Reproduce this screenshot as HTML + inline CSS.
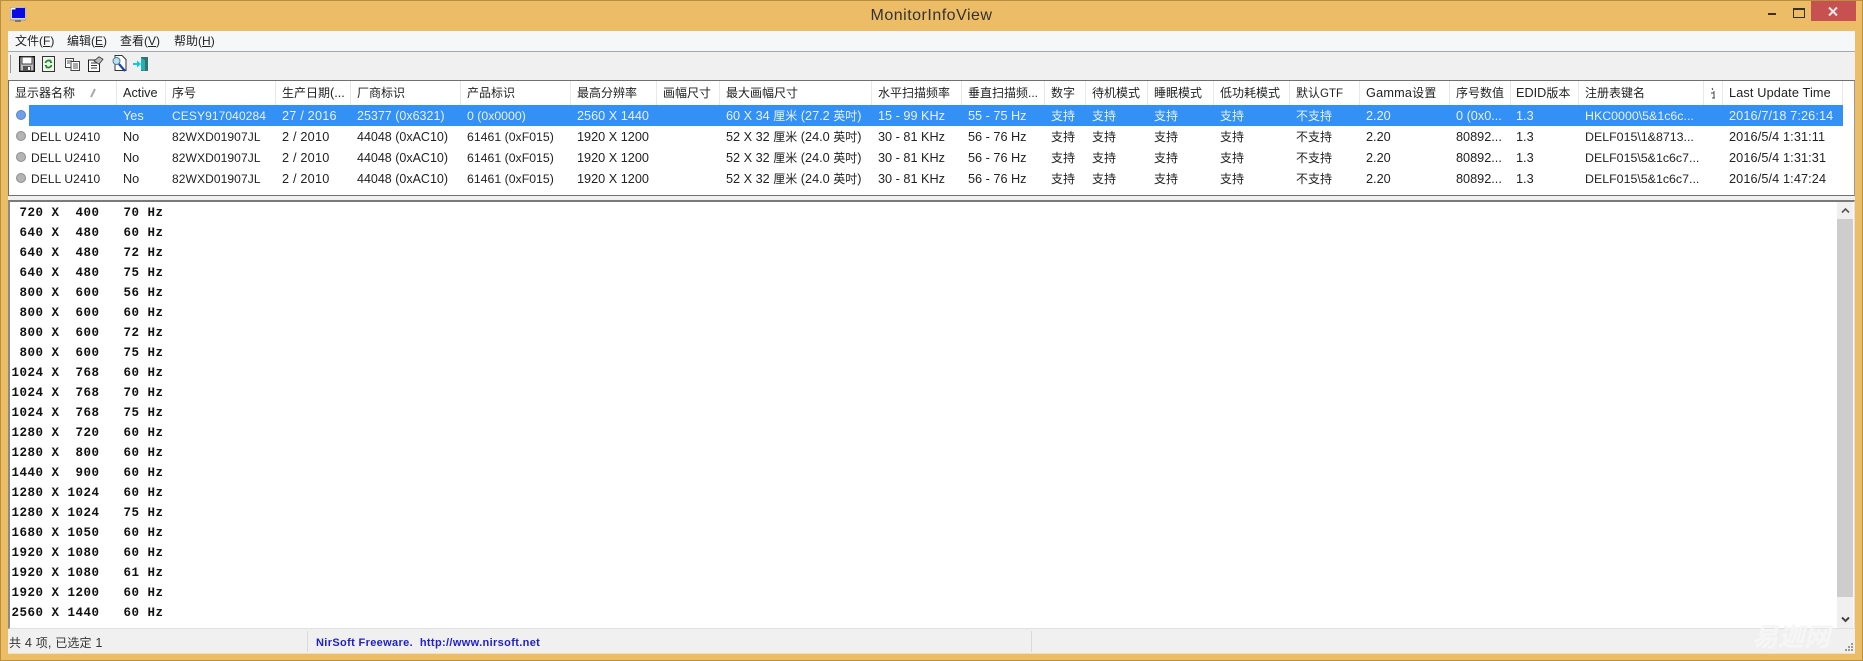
<!DOCTYPE html>
<html><head><meta charset="utf-8"><style>
html,body{margin:0;padding:0;width:1863px;height:661px;overflow:hidden;background:#edbc66}
body{position:relative;font-family:"Liberation Sans","Noto Sans CJK SC",sans-serif;color:#222}
div,span{position:absolute;white-space:pre}
i{font-style:normal;font-size:12px}
.h,.r{left:0;width:1863px;height:21px;line-height:21px;font-size:12.7px}
.h span{top:0}
.r span{top:1px}
.sep{top:81px;width:1px;height:24px;background:#e8e8e8}
.dot{left:16px;width:10px;height:10px;border-radius:50%;background:#b4b4b4;border:1px solid #8e8e8e;box-sizing:border-box}
.r.s{color:#e6f1ff}
.r .n{font-size:12px;letter-spacing:.1px}
.r .d{letter-spacing:.2px}
.r .v{font-size:12.5px}
.r .p{font-size:12.3px}
.r .k{font-size:12.4px}
.r .t{letter-spacing:.12px}
.m{top:31px;height:20px;line-height:20px;font-size:12px;color:#222}
</style></head><body>
<div style="left:0;top:0;width:1863px;height:661px;box-sizing:border-box;border:1px solid #b8903f"></div>
<svg style="position:absolute;left:10px;top:7px" width="16" height="16" viewBox="0 0 16 16"><rect x="0" y="0" width="16" height="13" fill="#d8d8d8" stroke="#666" stroke-width=".5"/><rect x="2" y="1" width="13" height="10" fill="#0a0ae0"/><rect x="1.5" y="1" width="4" height="1.5" fill="#fff"/><rect x="5" y="13" width="6" height="2" fill="#777"/></svg>
<div style="left:0;top:6px;width:1863px;text-align:center;font-size:16px;letter-spacing:.5px;line-height:20px;color:#333">MonitorInfoView</div>
<div style="left:1768px;top:13px;width:8px;height:2px;background:#3a3020"></div>
<div style="left:1793px;top:8px;width:10px;height:7px;border:1px solid #3a3020;border-top-width:2px"></div>
<div style="left:1811px;top:1px;width:45px;height:20px;background:#c75050"></div>
<svg style="position:absolute;left:1827px;top:6px" width="13" height="11" viewBox="0 0 13 11"><path d="M2 1.5L10 9.5M10 1.5L2 9.5" stroke="#f6e6e6" stroke-width="2"/></svg>

<div style="left:8px;top:31px;width:1847px;height:622px;background:#f0f0f0"></div>
<div style="left:8px;top:31px;width:1847px;height:20px;background:#f6f7f8"></div>
<div style="left:8px;top:51px;width:1847px;height:1px;background:#a8a8a8"></div>
<div class="m" style="left:15px"><i>文件</i>(<u>F</u>)</div>
<div class="m" style="left:67px"><i>编辑</i>(<u>E</u>)</div>
<div class="m" style="left:120px"><i>查看</i>(<u>V</u>)</div>
<div class="m" style="left:174px"><i>帮助</i>(<u>H</u>)</div>

<div style="left:10px;top:55px;width:1px;height:18px;background:#9a9a9a"></div>
<svg style="position:absolute;left:19px;top:56px" width="16" height="16" viewBox="0 0 16 16"><rect x=".7" y=".7" width="14.6" height="14.6" fill="#bdbdbd" stroke="#111" stroke-width="1.4"/><rect x="3" y="1" width="10" height="7" fill="#fff" stroke="#444" stroke-width="1"/><rect x="4" y="10" width="8" height="5" fill="#555"/><rect x="9" y="11" width="2" height="3" fill="#fff"/></svg>
<svg style="position:absolute;left:42px;top:56px" width="13" height="16" viewBox="0 0 13 16"><rect x=".5" y=".5" width="12" height="15" fill="#eef6ea" stroke="#333"/><path d="M3.5 7a3.2 3.2 0 0 1 5.5-1.5M9.5 9a3.2 3.2 0 0 1-5.5 1.5" fill="none" stroke="#1d8a2a" stroke-width="1.8"/><path d="M8 3v4h2.500zM5 13V9H2.500z" fill="#1d8a2a"/></svg>
<svg style="position:absolute;left:65px;top:58px" width="15" height="13" viewBox="0 0 15 13"><rect x=".5" y=".5" width="8" height="9" fill="#fff" stroke="#444"/><rect x="6" y="3.500" width="8.500" height="9" fill="#fff" stroke="#444"/><path d="M2 3h5M2 5h3M8 6h5M8 8h5M8 10h5" stroke="#555"/></svg>
<svg style="position:absolute;left:88px;top:56px" width="16" height="16" viewBox="0 0 16 16"><rect x=".5" y="4" width="11" height="11.500" fill="#fff" stroke="#222"/><path d="M3 7h6M3 9.500h6M3 12h6" stroke="#333"/><path d="M6 5L11 .8l4 2.400-4 5z" fill="#bbb" stroke="#333" stroke-width=".8"/></svg>
<svg style="position:absolute;left:112px;top:55px" width="15" height="18" viewBox="0 0 15 18"><path d="M3 .5h7l4 4v11H3z" fill="#fff" stroke="#333"/><circle cx="4.500" cy="6" r="3.500" fill="#bfe0ee" stroke="#4a7f9a"/><path d="M7 9l6 7" stroke="#2040b0" stroke-width="2.200"/></svg>
<svg style="position:absolute;left:133px;top:56px" width="16" height="16" viewBox="0 0 16 16"><rect x="8" y="1" width="7" height="14" fill="#3a6f70"/><path d="M8 2l4 2v11l-4-1z" fill="#1bb5b5"/><path d="M0 7h4V4.500L8 8l-4 3.500V9H0z" fill="#10c8d8"/></svg>

<div style="left:8px;top:80px;width:1847px;height:116px;box-sizing:border-box;background:#fff;border:1px solid #707070;border-right-color:#9a9a9a"></div>
<div class="sep" style="left:116px"></div><div class="sep" style="left:165px"></div><div class="sep" style="left:275px"></div><div class="sep" style="left:350px"></div><div class="sep" style="left:460px"></div><div class="sep" style="left:570px"></div><div class="sep" style="left:656px"></div><div class="sep" style="left:719px"></div><div class="sep" style="left:871px"></div><div class="sep" style="left:961px"></div><div class="sep" style="left:1044px"></div><div class="sep" style="left:1085px"></div><div class="sep" style="left:1147px"></div><div class="sep" style="left:1213px"></div><div class="sep" style="left:1289px"></div><div class="sep" style="left:1359px"></div><div class="sep" style="left:1449px"></div><div class="sep" style="left:1510px"></div><div class="sep" style="left:1578px"></div><div class="sep" style="left:1703px"></div><div class="sep" style="left:1722px"></div><div class="sep" style="left:1842px"></div>

<div class="h" style="top:82px;height:23px;line-height:23px">
<span style="left:15px"><i>显示器名称</i></span><span style="left:123px">Active</span><span style="left:172px"><i>序号</i></span><span style="left:282px"><i>生产日期</i>(...</span><span style="left:357px"><i>厂商标识</i></span><span style="left:467px"><i>产品标识</i></span><span style="left:577px"><i>最高分辨率</i></span><span style="left:663px"><i>画幅尺寸</i></span><span style="left:726px"><i>最大画幅尺寸</i></span><span style="left:878px"><i>水平扫描频率</i></span><span style="left:968px"><i>垂直扫描频...</i></span><span style="left:1051px"><i>数字</i></span><span style="left:1092px"><i>待机模式</i></span><span style="left:1154px"><i>睡眠模式</i></span><span style="left:1220px"><i>低功耗模式</i></span><span style="left:1296px;font-size:11.5px"><i>默认</i>GTF</span><span style="left:1366px;letter-spacing:.2px">Gamma<i>设置</i></span><span style="left:1456px"><i>序号数值</i></span><span style="left:1516px">EDID<i>版本</i></span><span style="left:1585px"><i>注册表键名</i></span><span style="left:1729px;letter-spacing:.15px">Last Update Time</span>
</div>
<svg style="position:absolute;left:1710px;top:87px" width="7" height="13" viewBox="0 0 7 13"><path d="M2 1l1 2M4 4v7M1 6h3M2 11h3" stroke="#444" stroke-width="1" fill="none"/></svg>
<svg style="position:absolute;left:90px;top:88px" width="7" height="10" viewBox="0 0 7 10"><path d="M1 9L5 1" stroke="#aaa" stroke-width="2"/></svg>

<div style="left:29px;top:105px;width:1814px;height:21px;background:#3390f5"></div>
<div class="dot" style="top:110px;background:#6f9fe8;border-color:#5a84c8"></div>
<div class="dot" style="top:131px"></div><div class="dot" style="top:152px"></div><div class="dot" style="top:173px"></div>

<div class="r s" style="top:105px">
<span style="left:123px">Yes</span><span class="n" style="left:172px">CESY917040284</span><span class="d" style="left:282px">27 / 2016</span><span class="v" style="left:357px">25377 (0x6321)</span><span class="p" style="left:467px">0 (0x0000)</span><span style="left:577px">2560 X 1440</span><span style="left:726px">60 X 34 <i>厘米</i> (27.2 <i>英吋</i>)</span><span style="left:878px">15 - 99 KHz</span><span style="left:968px">55 - 75 Hz</span><span style="left:1051px"><i>支持</i></span><span style="left:1092px"><i>支持</i></span><span style="left:1154px"><i>支持</i></span><span style="left:1220px"><i>支持</i></span><span style="left:1296px"><i>不支持</i></span><span style="left:1366px">2.20</span><span style="left:1456px">0 (0x0...</span><span style="left:1516px">1.3</span><span class="k" style="left:1585px">HKC0000\5&amp;1c6c...</span><span class="t" style="left:1729px">2016/7/18 7:26:14</span>
</div>
<div class="r" style="top:126px">
<span class="n" style="left:31px">DELL U2410</span><span style="left:123px">No</span><span class="n" style="left:172px">82WXD01907JL</span><span class="d" style="left:282px">2 / 2010</span><span class="v" style="left:357px">44048 (0xAC10)</span><span class="p" style="left:467px">61461 (0xF015)</span><span style="left:577px">1920 X 1200</span><span style="left:726px">52 X 32 <i>厘米</i> (24.0 <i>英吋</i>)</span><span style="left:878px">30 - 81 KHz</span><span style="left:968px">56 - 76 Hz</span><span style="left:1051px"><i>支持</i></span><span style="left:1092px"><i>支持</i></span><span style="left:1154px"><i>支持</i></span><span style="left:1220px"><i>支持</i></span><span style="left:1296px"><i>不支持</i></span><span style="left:1366px">2.20</span><span style="left:1456px">80892...</span><span style="left:1516px">1.3</span><span class="k" style="left:1585px">DELF015\1&amp;8713...</span><span class="t" style="left:1729px">2016/5/4 1:31:11</span>
</div>
<div class="r" style="top:147px">
<span class="n" style="left:31px">DELL U2410</span><span style="left:123px">No</span><span class="n" style="left:172px">82WXD01907JL</span><span class="d" style="left:282px">2 / 2010</span><span class="v" style="left:357px">44048 (0xAC10)</span><span class="p" style="left:467px">61461 (0xF015)</span><span style="left:577px">1920 X 1200</span><span style="left:726px">52 X 32 <i>厘米</i> (24.0 <i>英吋</i>)</span><span style="left:878px">30 - 81 KHz</span><span style="left:968px">56 - 76 Hz</span><span style="left:1051px"><i>支持</i></span><span style="left:1092px"><i>支持</i></span><span style="left:1154px"><i>支持</i></span><span style="left:1220px"><i>支持</i></span><span style="left:1296px"><i>不支持</i></span><span style="left:1366px">2.20</span><span style="left:1456px">80892...</span><span style="left:1516px">1.3</span><span class="k" style="left:1585px">DELF015\5&amp;1c6c7...</span><span class="t" style="left:1729px">2016/5/4 1:31:31</span>
</div>
<div class="r" style="top:168px">
<span class="n" style="left:31px">DELL U2410</span><span style="left:123px">No</span><span class="n" style="left:172px">82WXD01907JL</span><span class="d" style="left:282px">2 / 2010</span><span class="v" style="left:357px">44048 (0xAC10)</span><span class="p" style="left:467px">61461 (0xF015)</span><span style="left:577px">1920 X 1200</span><span style="left:726px">52 X 32 <i>厘米</i> (24.0 <i>英吋</i>)</span><span style="left:878px">30 - 81 KHz</span><span style="left:968px">56 - 76 Hz</span><span style="left:1051px"><i>支持</i></span><span style="left:1092px"><i>支持</i></span><span style="left:1154px"><i>支持</i></span><span style="left:1220px"><i>支持</i></span><span style="left:1296px"><i>不支持</i></span><span style="left:1366px">2.20</span><span style="left:1456px">80892...</span><span style="left:1516px">1.3</span><span class="k" style="left:1585px">DELF015\5&amp;1c6c7...</span><span class="t" style="left:1729px">2016/5/4 1:47:24</span>
</div>

<div style="left:8px;top:200px;width:1847px;height:429px;box-sizing:border-box;background:#fff;border-top:2px solid #7a7a7a;border-left:2px solid #8a8a8a;border-right:1px solid #e0e0e0;border-bottom:1px solid #e0e0e0"></div>
<pre style="position:absolute;left:11.500px;top:203px;margin:0;font:bold 12.5px/20px 'Liberation Mono',monospace;letter-spacing:.5px;color:#111"> 720 X  400   70 Hz
 640 X  480   60 Hz
 640 X  480   72 Hz
 640 X  480   75 Hz
 800 X  600   56 Hz
 800 X  600   60 Hz
 800 X  600   72 Hz
 800 X  600   75 Hz
1024 X  768   60 Hz
1024 X  768   70 Hz
1024 X  768   75 Hz
1280 X  720   60 Hz
1280 X  800   60 Hz
1440 X  900   60 Hz
1280 X 1024   60 Hz
1280 X 1024   75 Hz
1680 X 1050   60 Hz
1920 X 1080   60 Hz
1920 X 1080   61 Hz
1920 X 1200   60 Hz
2560 X 1440   60 Hz</pre>
<div style="left:1837px;top:202px;width:16px;height:426px;background:#f0f0f0"></div>
<div style="left:1837px;top:219px;width:16px;height:378px;background:#cdcdcd"></div>
<svg style="position:absolute;left:1841px;top:207px" width="9" height="7" viewBox="0 0 9 7"><path d="M1 5.500L4.500 2 8 5.500" fill="none" stroke="#555" stroke-width="1.600"/></svg>
<svg style="position:absolute;left:1841px;top:616px" width="9" height="7" viewBox="0 0 9 7"><path d="M1 1.500L4.500 5 8 1.500" fill="none" stroke="#444" stroke-width="2"/></svg>

<div style="left:9px;top:632px;height:23px;line-height:23px;font-size:12.7px;letter-spacing:.15px;color:#333"><i>共</i> 4 <i>项</i>, <i>已选定</i> 1</div>
<div style="left:307px;top:631px;width:1px;height:21px;background:#dadada"></div>
<div style="left:1031px;top:631px;width:1px;height:21px;background:#dadada"></div>
<div style="left:316px;top:632px;height:22px;line-height:22px;font-size:11px;font-weight:bold;color:#1f1fc8;letter-spacing:.35px">NirSoft Freeware.  http://www.nirsoft.net</div>
<div style="left:1752px;top:624px;height:26px;line-height:26px;font-size:26px;font-style:italic;font-weight:bold;color:#f6f6f6">易迦网</div>
<svg style="position:absolute;left:1843px;top:642px" width="11" height="11" viewBox="0 0 11 11"><path d="M8 1h2v2H8zM5 4h2v2H5zM8 4h2v2H8zM2 7h2v2H2zM5 7h2v2H5zM8 7h2v2H8z" fill="#999"/></svg>
<div style="left:8px;top:653px;width:1847px;height:1px;background:#f8dfb0"></div>
</body></html>
